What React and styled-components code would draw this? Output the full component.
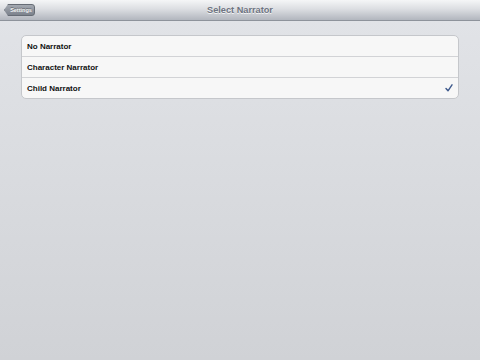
import React from 'react';
import styled, { createGlobalStyle } from 'styled-components';

const Global = createGlobalStyle`
  html, body { margin: 0; padding: 0; }
  body { font-family: "Liberation Sans", Arial, sans-serif; }
`;

const Screen = styled.div`
  width: 480px;
  height: 360px;
  display: flex;
  flex-direction: column;
  background: linear-gradient(#e2e4e8, #d0d2d6);
  overflow: hidden;
`;

const NavBar = styled.div`
  height: 20px;
  position: relative;
  display: flex;
  align-items: center;
  justify-content: center;
  background: linear-gradient(#f5f6f7 0%, #dcdee2 45%, #b2b6be 100%);
  border-bottom: 1px solid #8e939b;
`;

const BackButton = styled.div`
  position: absolute;
  left: 4px;
  top: 4px;
  height: 12px;
  width: 31px;
  padding-left: 3px;
  box-sizing: border-box;
  display: flex;
  align-items: center;
  justify-content: center;
  font-size: 5.5px;
  font-weight: bold;
  color: #f4f5f6;
  text-shadow: 0 -1px 0 rgba(0, 0, 0, 0.35);
  background: linear-gradient(#a4a9b1, #7c828c);
  border: 1px solid #666c75;
  border-radius: 2px 3px 3px 2px;
  clip-path: polygon(4px 0, 100% 0, 100% 100%, 4px 100%, 0 50%);
`;

const Title = styled.div`
  font-size: 9.2px;
  font-weight: bold;
  color: #6e7481;
  text-shadow: 0 1px 0 rgba(255, 255, 255, 0.8);
`;

const Content = styled.div`
  padding: 14px 21px 0 21px;
`;

const Group = styled.div`
  background: #f7f7f7;
  border: 1px solid #c5c7cb;
  border-radius: 5px;
  overflow: hidden;
`;

const Row = styled.div`
  height: 20px;
  display: flex;
  align-items: center;
  justify-content: space-between;
  padding: 0 5px;
  font-size: 8px;
  font-weight: bold;
  color: #111;
  border-top: ${(p) => (p.$first ? 'none' : '1px solid #d2d3d6')};
`;

const Check = () => (
  <svg width="8" height="8" viewBox="0 0 8 8">
    <path d="M1 4.5 L3 6.8 L7 0.8" fill="none" stroke="#3f5a8c" strokeWidth="1.4" strokeLinecap="round" strokeLinejoin="round" />
  </svg>
);

const items = [
  { label: 'No Narrator' },
  { label: 'Character Narrator' },
  { label: 'Child Narrator', checked: true },
];

export default function App() {
  return (
    <Screen>
      <Global />
      <NavBar>
        <BackButton>Settings</BackButton>
        <Title>Select Narrator</Title>
      </NavBar>
      <Content>
        <Group>
          {items.map((it, i) => (
            <Row key={it.label} $first={i === 0}>
              {it.label}
              {it.checked && <Check />}
            </Row>
          ))}
        </Group>
      </Content>
    </Screen>
  );
}
